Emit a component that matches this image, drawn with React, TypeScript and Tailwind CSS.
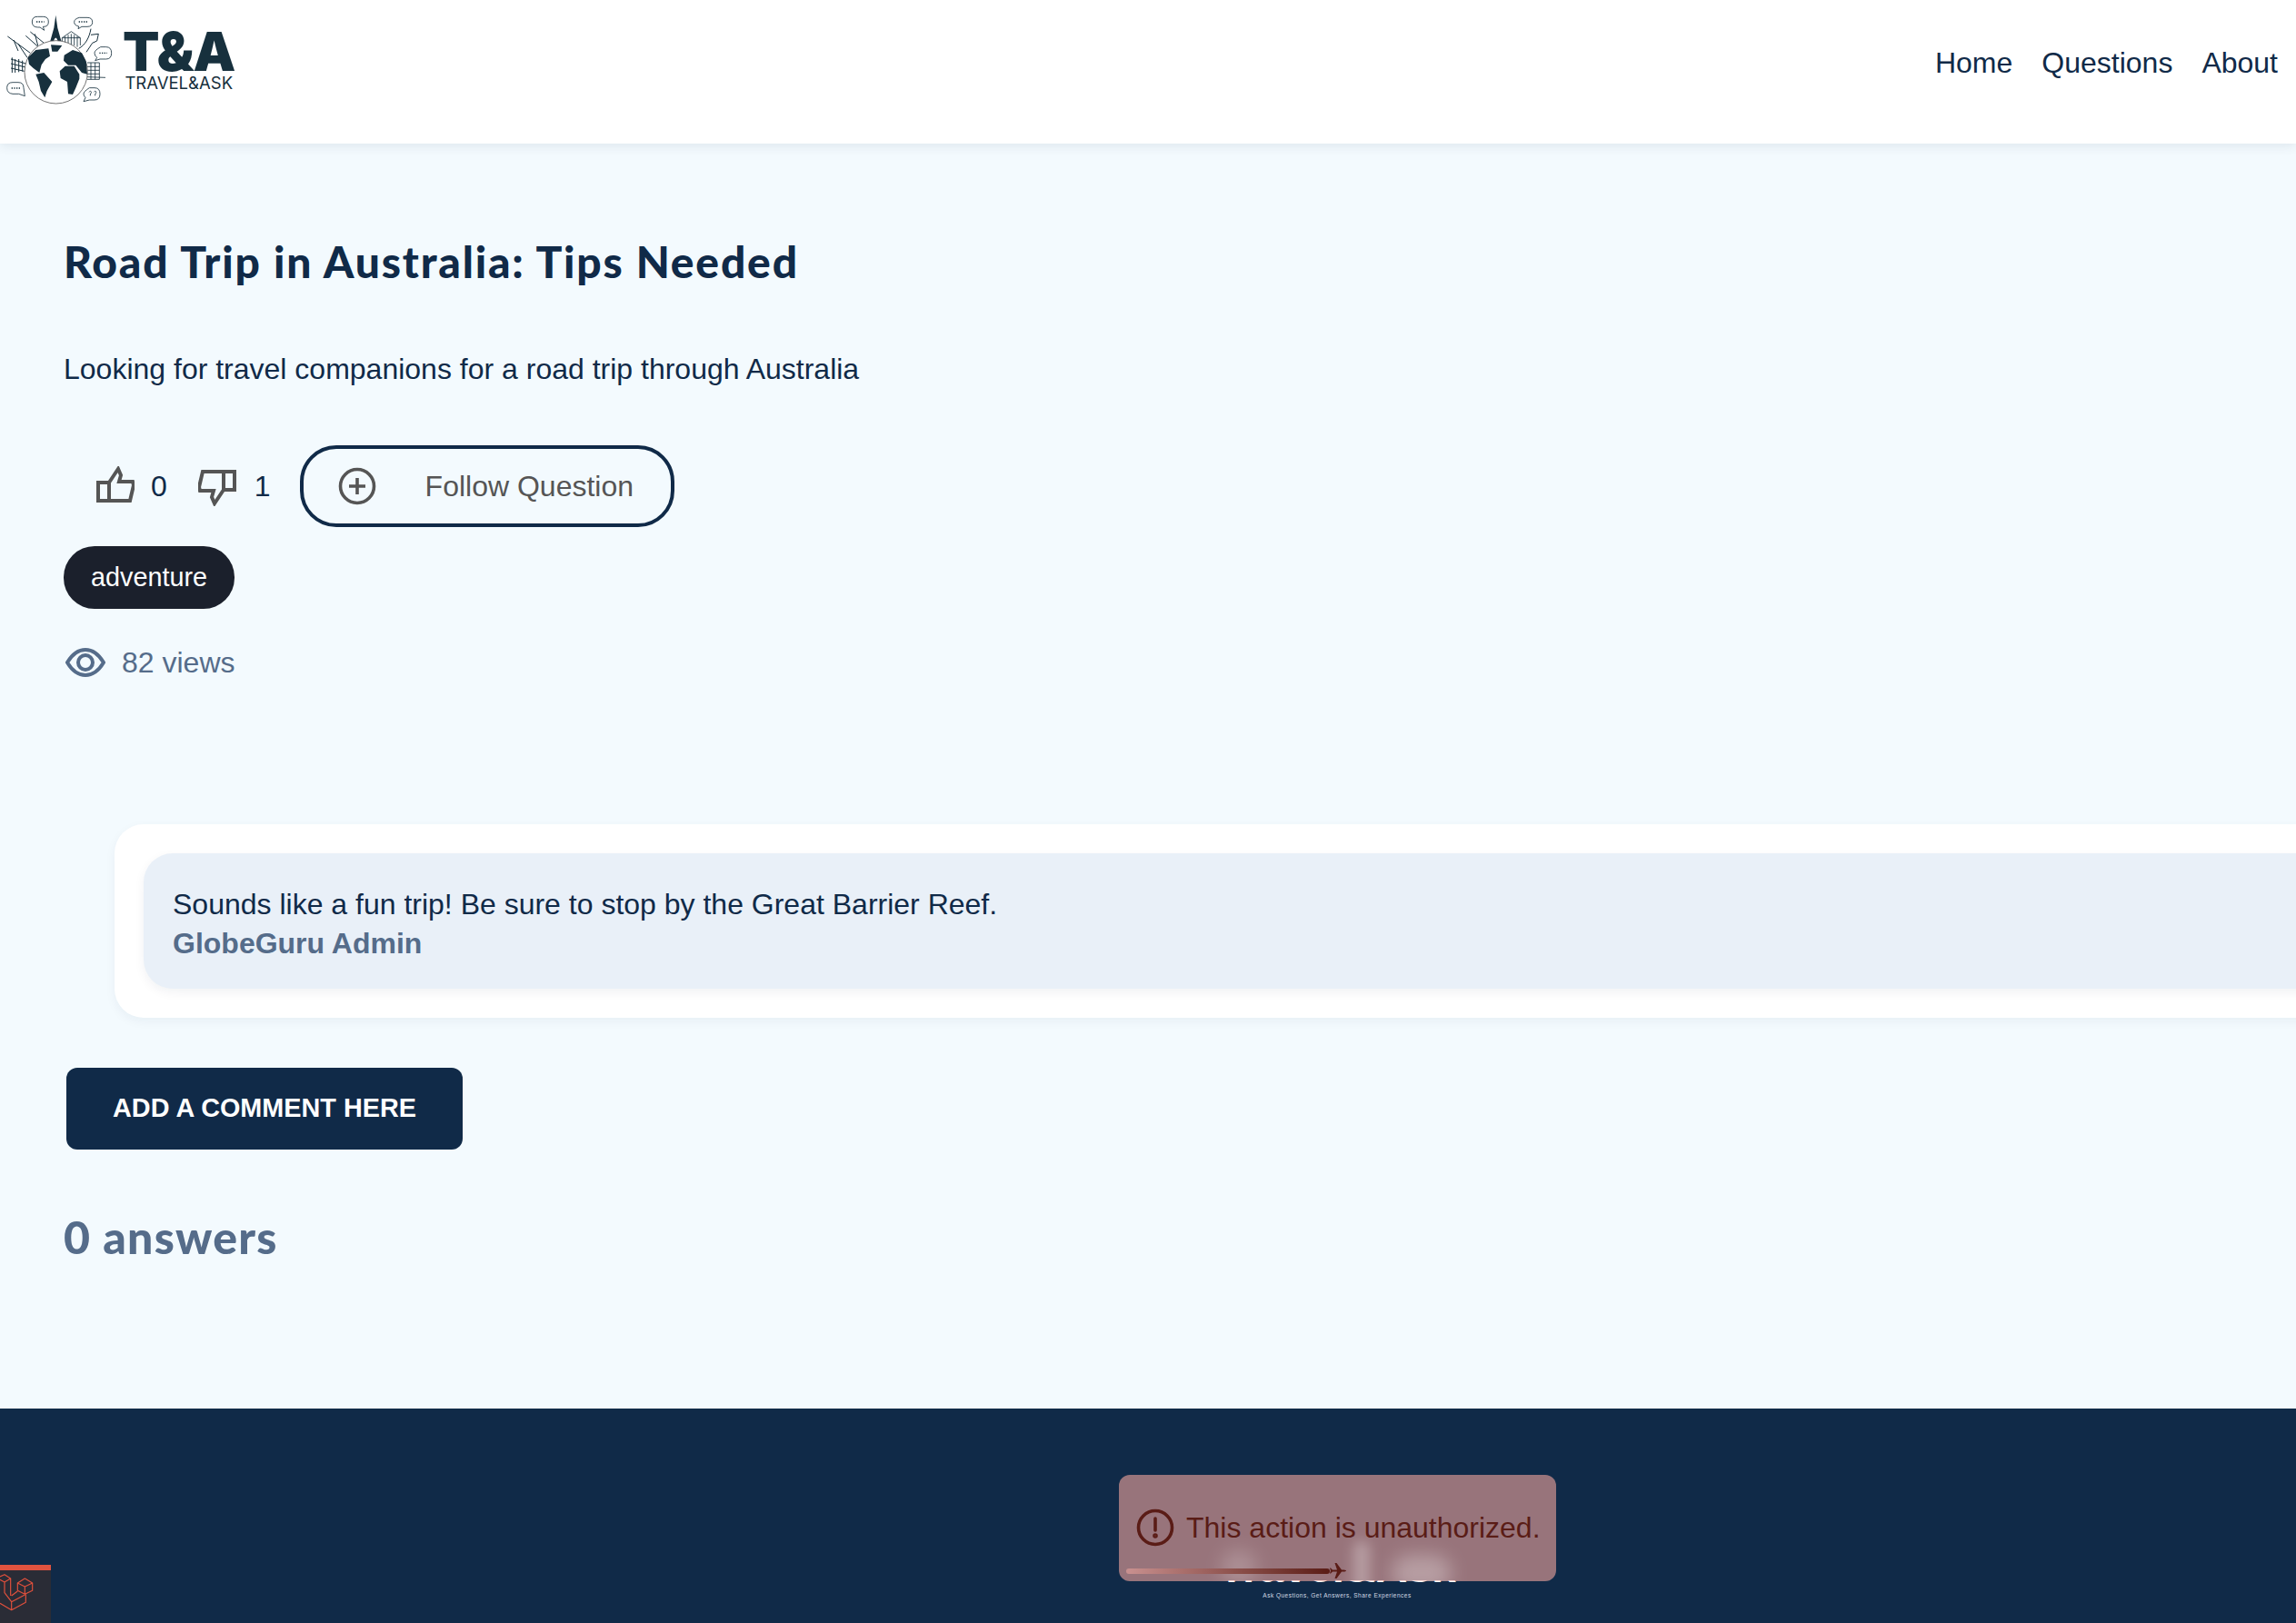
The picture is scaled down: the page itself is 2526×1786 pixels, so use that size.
const sans = '"Liberation Sans", Arial, sans-serif';

function Thumb({ down = false }: { down?: boolean }) {
  return (
    <svg width="42" height="40" viewBox="0 0 42 40" fill="none" stroke="#555" strokeWidth="4" className={down ? "mt-[4px] rotate-180" : "-mt-[4px]"}>
      <path d="M2 18H14V38H2Z" />
      <path d="M14 18 24 3 27 10 25 17H40L41 21 37 38H14" />
    </svg>
  );
}

function Bubble({ d }: { d: string }) {
  return <path d={d} fill="#fff" stroke="#17303d" strokeWidth="2.5" />;
}

function Logo() {
  return (
    <div className="flex items-start">
      <svg width="130" height="115" viewBox="0 0 390 345" fill="none" stroke="#17303d" className="shrink-0">
        <path d="M184 50 178 92 166 135H177Q184 114 191 135H202L190 92Z" fill="#17303d" stroke="none" />
        <path d="M25 120 100 175M45 132 60 168M60 145 90 190M85 118 130 158M100 105 145 142M115 112 125 150" strokeWidth="3" />
        <path d="M205 125 235 104 265 125V150M205 125V140M215 120V145M225 115V145M235 112V148M245 115V150M255 120V155M205 125H265" strokeWidth="2.5" />
        <path d="M260 160C280 150 295 125 300 95M300 115 325 112 320 135 305 142 285 172" strokeWidth="3" />
        <path d="M36 195 85 210M36 210 85 222M36 225 80 235M40 190V240M50 195V240M62 195V238M74 200V236" strokeWidth="3" />
        <path d="M288 207H328V262H288M288 220H328M288 232H328M288 244H328M288 254 348 256M300 207V262M314 207V262" strokeWidth="2.5" />
        <circle cx="185" cy="238" r="104" fill="#fff" strokeWidth="2.5" stroke="#555" />
        <path d="M92 190 118 165 160 160 165 185 150 195 137 214 130 240 110 225 96 212Z" fill="#17303d" stroke="none" />
        <path d="M118 245 145 240 172 270 155 300 148 322 135 300 128 270Z" fill="#17303d" stroke="none" />
        <path d="M168 148 205 150 190 170 172 170Z" fill="#17303d" stroke="none" />
        <path d="M212 182 240 165 270 175 285 205 288 245 270 240 250 215 225 215 210 200Z" fill="#17303d" stroke="none" />
        <path d="M197 235 215 218 245 218 262 245 262 260 250 290 240 312 225 310 222 270 200 258Z" fill="#17303d" stroke="none" />
        <Bubble d="M125 55H142Q160 55 160 72T142 88L146 100 132 90H125Q106 90 106 72T125 55Z" />
        <Bubble d="M262 58H288Q305 58 305 73T288 88H270L258 95 260 87Q245 84 245 73T262 58Z" />
        <Bubble d="M332 155H350Q368 155 368 175T350 195H330L314 200 320 190Q312 184 312 175T332 155Z" />
        <Bubble d="M42 272H60Q78 272 78 290L82 317 62 310H42Q23 308 23 290T42 272Z" />
        <Bubble d="M295 290H312Q330 290 330 310T312 330H295L276 335 282 322Q276 318 276 310T295 290Z" />
        <path d="M120 72H146M260 72H292M328 175H354M38 291H66" stroke="#17303d" strokeWidth="4" strokeDasharray="4 4" />
        <path d="M294 304C298 298 304 302 300 308L298 312V316M310 304C314 298 320 302 316 308L314 312V316" strokeWidth="2.5" />
      </svg>
      <div className="ml-[5px] mt-[35px] flex flex-col items-center">
        <span className="text-[59px] leading-[44px] font-black tracking-[-1px] text-[#17303d]" style={{ fontFamily: "Inter, sans-serif" }}>T&amp;A</span>
        <span className="mt-[4px] text-[18.5px] leading-[16px] text-[#17303d]" style={{ fontFamily: "Inter, sans-serif" }}>TRAVEL&amp;ASK</span>
      </div>
    </div>
  );
}

function LaravelMark() {
  return (
    <svg width="56" height="48" viewBox="0 113 168 144" fill="none" stroke="#e0503c" strokeWidth="3.5" strokeLinejoin="round" className="mt-[4px]">
      <path d="M0 122 15 115 35 128 15 140 0 132M35 128V185M15 140V175L38 205 82 182M38 185 58 170M0 210 38 232 85 207V180M38 205V232" />
      <path d="M58 143 82 128 107 143V168L82 180 58 168ZM58 143 82 155 107 143M82 155V180" />
    </svg>
  );
}

export default function App() {
  return (
    <div className="relative flex h-[1786px] w-[2526px] flex-col overflow-hidden bg-[#f3fafe] text-[#102a48]" style={{ fontFamily: sans }}>
      <header className="z-10 flex h-[158px] shrink-0 items-start justify-between bg-white pr-[20px] shadow-[0_2px_12px_rgba(16,42,72,0.1)]">
        <Logo />
        <nav className="mt-[50px] flex gap-[32px] text-[32px] leading-[38px]">
          <span>Home</span>
          <span>Questions</span>
          <span>About</span>
        </nav>
      </header>

      <main className="flex flex-1 flex-col pl-[70px]">
        <h1 className="mt-[100px] text-[48px] leading-[60px] font-black tracking-[1.8px]" style={{ fontFamily: "Lato, sans-serif" }}>Road Trip in Australia: Tips Needed</h1>
        <p className="mt-[69px] text-[32px] leading-[38px]">Looking for travel companions for a road trip through Australia</p>
        <div className="mt-[65px] flex h-[90px] items-center pl-[36px] text-[32px]">
          <Thumb />
          <span className="ml-[18px]">0</span>
          <span className="ml-[34px] flex"><Thumb down /></span>
          <span className="ml-[20px]">1</span>
          <button className="ml-[32px] flex h-[90px] w-[412px] items-center rounded-[40px] border-[4px] border-[#102a48] pl-[38px] text-[#555]">
            <svg width="42" height="42" viewBox="0 0 42 42" fill="none" stroke="#555" strokeWidth="3.6"><circle cx="21" cy="21" r="18.5" /><path d="M21 12v18M12 21h18" /></svg>
            <span className="ml-[54px]">Follow Question</span>
          </button>
        </div>
        <span className="mt-[21px] flex h-[69px] w-[188px] items-center justify-center rounded-[34px] bg-[#1b202c] text-[28.8px] text-white">adventure</span>
        <div className="mt-[35px] flex items-center text-[32px] text-[#556c8a]">
          <svg width="44" height="32" viewBox="0 0 44 32" fill="none" stroke="#556c8a" strokeWidth="4" className="ml-[2px]"><path d="M2 16C8 6 14 2 22 2s14 4 20 14c-6 10-12 14-20 14S8 26 2 16Z" /><circle cx="22" cy="16" r="8" /></svg>
          <span className="ml-[18px]">82 views</span>
        </div>

        <section className="mt-[154px] ml-[56px] -mr-[100px] rounded-[32px] bg-white p-[32px] shadow-[0_4px_12px_rgba(16,42,72,0.05)]">
          <div className="flex h-[149px] flex-col justify-center rounded-[32px] bg-[#e9f0f8] px-[32px] pt-[6px] shadow-[0_4px_12px_rgba(16,42,72,0.06)]">
            <p className="text-[32px] leading-[43px]">Sounds like a fun trip! Be sure to stop by the Great Barrier Reef.</p>
            <p className="text-[32px] leading-[43px] font-bold text-[#556c8a]">GlobeGuru Admin</p>
          </div>
        </section>

        <button className="mt-[55px] ml-[3px] h-[90px] w-[436px] rounded-[12px] bg-[#102a48] text-[28.8px] font-bold text-white">ADD A COMMENT HERE</button>
        <h2 className="mt-[66px] text-[50px] leading-[60px] font-black tracking-[1.2px] text-[#556c8a]" style={{ fontFamily: "Lato, sans-serif" }}>0 answers</h2>
      </main>

      <footer className="flex h-[236px] shrink-0 flex-col items-center bg-[#102a48] pl-[416px] pt-[189px] text-white">
        <div className="flex h-[3px] items-end overflow-hidden">
          <span className="mb-[-12px] text-[48px] leading-[58px] font-bold whitespace-nowrap">Travel&amp;Ask</span>
        </div>
        <span className="mt-[9px] text-[6.5px] leading-[10px] tracking-[0.5px] text-[#d5dce5]">Ask Questions, Get Answers, Share Experiences</span>
      </footer>

      <div className="absolute left-[1231px] top-[1623px] h-[117px] w-[481px] overflow-hidden rounded-[12px] bg-[#f4a79f]/60">
        <div className="absolute left-[112px] top-[82px] h-[40px] w-[40px] rounded-full bg-white/20 blur-[10px]" />
        <div className="absolute left-[258px] top-[72px] h-[60px] w-[18px] rounded-full bg-white/30 blur-[7px]" />
        <div className="absolute left-[300px] top-[88px] h-[40px] w-[66px] rounded-full bg-white/30 blur-[10px]" />
        <div className="relative flex h-[117px] items-start pl-[19px] pt-[37px] text-[#5a1c16]">
          <svg width="42" height="42" viewBox="0 0 42 42" fill="none" stroke="#5a1c16" strokeWidth="3.6"><circle cx="21" cy="21" r="18.5" /><path d="M21 11v13" strokeLinecap="round" /><circle cx="21" cy="30" r="1" fill="#5a1c16" /></svg>
          <span className="ml-[13px] whitespace-nowrap text-[32px] leading-[42px]">This action is unauthorized.</span>
        </div>
        <div className="absolute left-[8px] top-[103px] h-[6px] w-[224px] rounded-full bg-gradient-to-r from-[#c99190] to-[#5a1c16]" />
        <svg className="absolute left-[232px] top-[97px]" width="18" height="17" viewBox="0 0 18 17" fill="#5a1c16"><path d="M18 8.500C18 7.500 15 7.500 13 7.500L7.500 0H5.500L8 7.500H3L1 5.500H0L1 8.500 0 11.500H1L3 9.500H8L5.500 17H7.500L13 9.500C15 9.500 18 9.500 18 8.500Z" /></svg>
      </div>

      <div className="absolute bottom-0 left-0 h-[64px] w-[56px] border-t-[6px] border-[#e0533f] bg-[#2a2c36]">
        <LaravelMark />
      </div>
    </div>
  );
}
